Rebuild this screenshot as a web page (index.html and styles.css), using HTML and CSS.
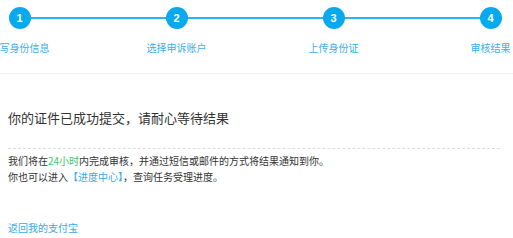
FILE: index.html
```html
<!DOCTYPE html>
<html>
    <head>
        <meta charset="UTF-8">
        <meta name="viewport" content="width=device-width, initial-scale=1.0">
        <title>申诉进度</title>
        <link rel="stylesheet" href="styles.css">
    </head>
    <body>
        <div class="steps-wrap">
            <div class="steps">
                <div class="step"><span class="num">1</span><span class="label">填写身份信息</span></div>
                <div class="step"><span class="num">2</span><span class="label">选择申诉账户</span></div>
                <div class="step"><span class="num">3</span><span class="label">上传身份证</span></div>
                <div class="step last"><span class="num">4</span><span class="label">审核结果</span></div>
            </div>
        </div>
        <div class="result">
            <h2 class="title">你的证件已成功提交，请耐心等待结果</h2>
            <p class="info">我们将在<span class="green">24小时</span>内完成审核，并通过短信或邮件的方式将结果通知到你。<br>你也可以进入<a href="#" class="link">【进度中心】</a>，查询任务受理进度。</p>
            <a href="#" class="back">返回我的支付宝</a>
        </div>
    </body>
</html>
```

FILE: styles.css
```css
body {
    margin:0;
    font-family:"Noto Sans CJK SC", "Liberation Sans", sans-serif;
    color:#333;
    background:#fff;
    overflow:hidden;
}
.steps-wrap {
    height:73px;
    border-bottom:1px solid #f1f1f1;
    overflow:hidden;
}
.steps {
    display:flex;
    margin-left:-59px;
    padding-top:7px;
}
.step {
    position:relative;
    width:157px;
    flex:none;
    display:flex;
    flex-direction:column;
    align-items:center;
}
.step::after {
    content:"";
    position:absolute;
    top:10px;
    left:50%;
    width:100%;
    height:2px;
    background:#2db3ef;
}
.step.last::after {display:none;}
.num {
    position:relative;
    z-index:1;
    width:22px;
    height:22px;
    border-radius:50%;
    background:#0aa9ee;
    color:#fff;
    font-family:"Liberation Sans", sans-serif;
    font-weight:bold;
    font-size:11px;
    line-height:22px;
    text-align:center;
}
.label {
    margin-top:12px;
    font-size:10px;
    line-height:14px;
    color:#3aaeea;
    white-space:nowrap;
}
.result {
    margin:0 13px 0 8px;
}
.title {
    margin:0;
    padding-top:35px;
    font-size:13px;
    font-weight:normal;
    line-height:18px;
    color:#333;
    padding-bottom:21px;
    border-bottom:1px dashed #ddd;
}
.info {
    margin:4px 0 0;
    font-size:10px;
    line-height:16px;
}
.green {color:#3cc46a;}
.link {
    color:#3aa8e8;
    text-decoration:none;
}
.back {
    display:inline-block;
    margin-top:36px;
    font-size:10px;
    line-height:14px;
    color:#3aa8e8;
    text-decoration:none;
}
```
